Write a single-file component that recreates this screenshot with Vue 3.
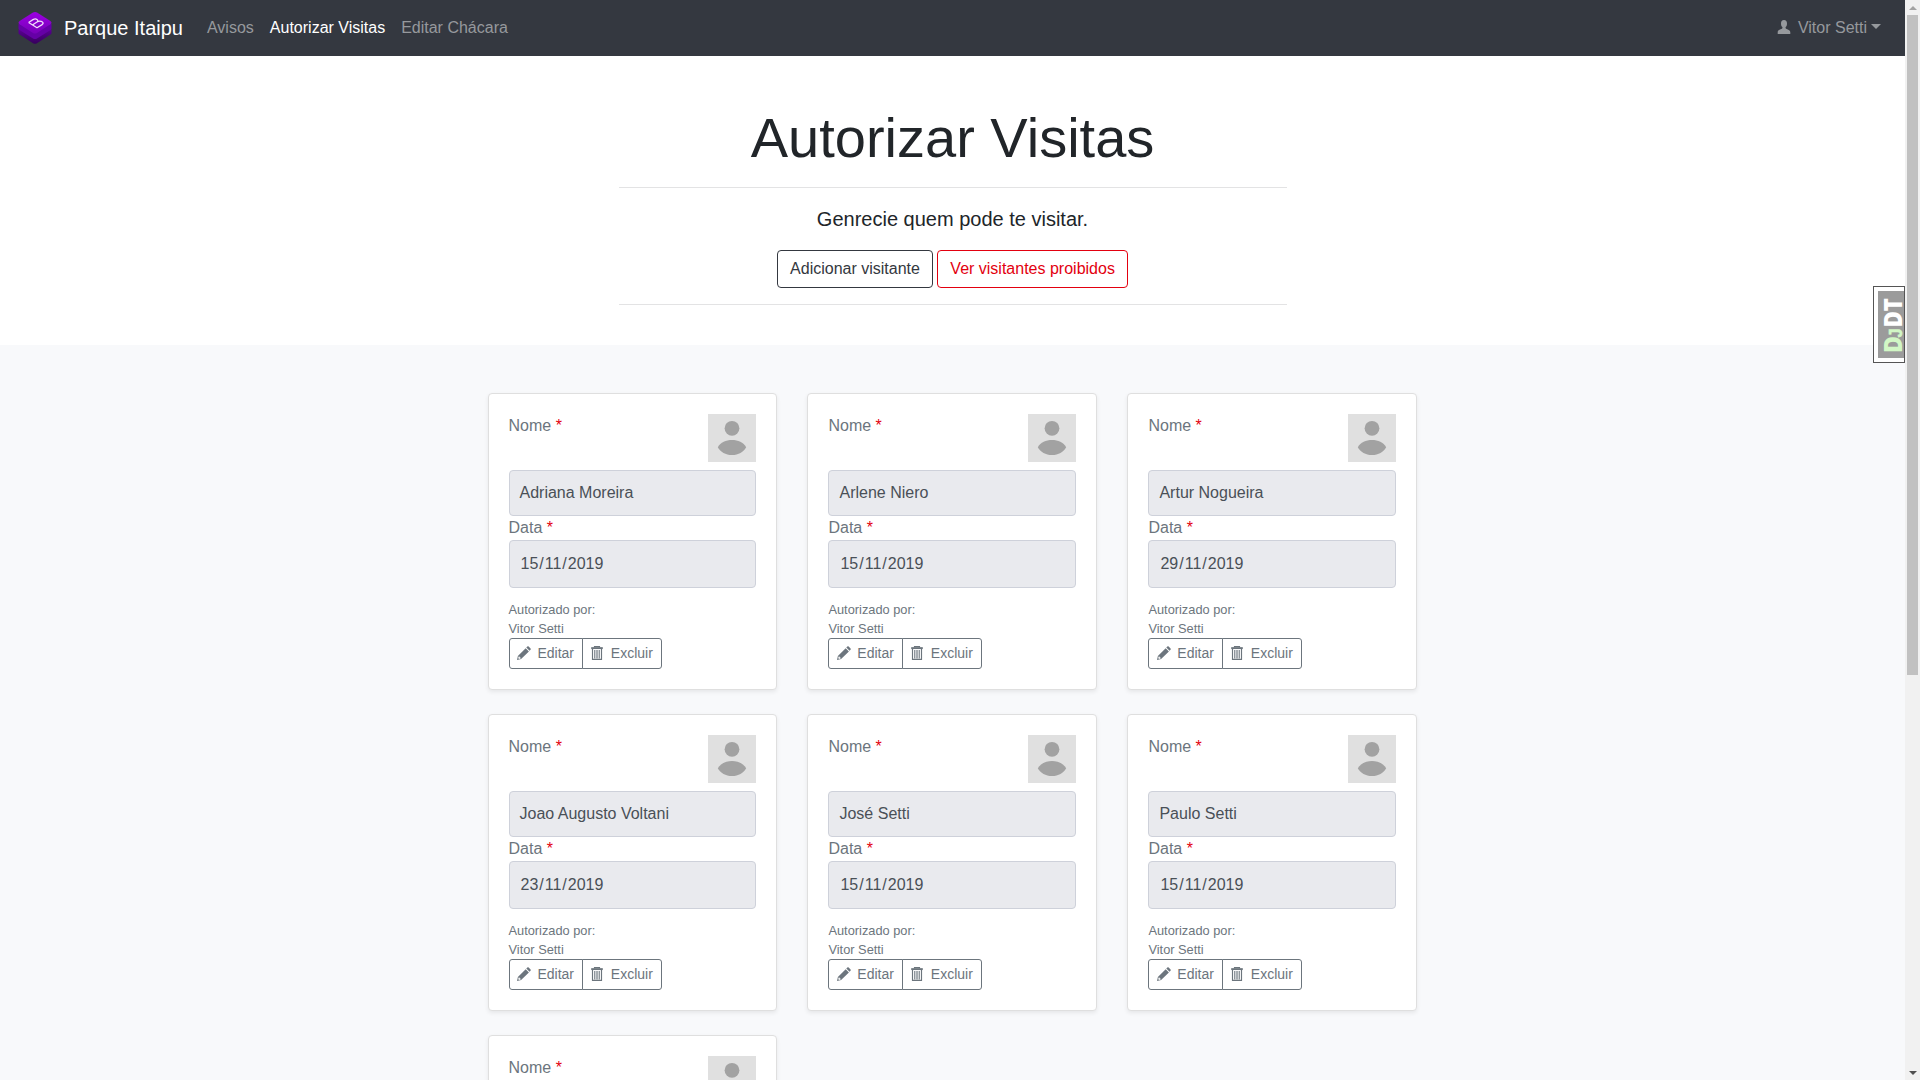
<script setup>
const visitors = [
  { id: 1, name: 'Adriana Moreira', date: ['15', '11', '2019'] },
  { id: 2, name: 'Arlene Niero', date: ['15', '11', '2019'] },
  { id: 3, name: 'Artur Nogueira', date: ['29', '11', '2019'] },
  { id: 4, name: 'Joao Augusto Voltani', date: ['23', '11', '2019'] },
  { id: 5, name: 'José Setti', date: ['15', '11', '2019'] },
  { id: 6, name: 'Paulo Setti', date: ['15', '11', '2019'] },
  { id: 7 },
]
</script>

<template>
  <div class="window">
    <div class="page">
      <nav class="navbar">
        <svg class="logo" width="34" height="34" viewBox="0 0 34 34">
          <defs>
            <linearGradient id="top" x1="0" y1="0" x2="0" y2="1">
              <stop offset="0" stop-color="#9c00e2" />
              <stop offset="1" stop-color="#7800b8" />
            </linearGradient>
            <linearGradient id="side" x1="0" y1="0" x2="0" y2="1">
              <stop offset="0" stop-color="#6a00ad" />
              <stop offset="1" stop-color="#36005c" />
            </linearGradient>
          </defs>
          <path d="M0.5 19 L17 12 L33.5 19 V22 Q33.5 23 32.5 23.6 L19 32.2 Q17 33.4 15 32.2 L1.5 23.6 Q.5 23 .5 22Z" fill="url(#side)" />
          <path d="M0.5 13 H33.5 V17.5 Q33.5 18.5 32.5 19 L19 27.5 Q17 28.7 15 27.5 L1.5 19 Q.5 18.5 .5 17.5Z" fill="#6500a6" />
          <path d="M15 1.6 Q17 .6 19 1.6 L32.4 10 Q34.6 11.8 32.4 13.3 L19 22 Q17 23.2 15 22 L1.6 13.3 Q-.6 11.8 1.6 10Z" fill="url(#top)" />
          <path d="M10.6 11.5 L19 16.7 L23.7 13.9 Q26.400 12 24 10.700 Q21.600 9.500 19 11 L14.800 13.800 M10.600 11.500 L15 8.600 Q17.400 7.300 19 8.500 Q20.700 9.800 19 11" fill="none" stroke="#f2ddfb" stroke-width="1.3" stroke-linejoin="round" />
        </svg>
        <span class="brand">Parque Itaipu</span>
        <a class="nav-link">Avisos</a>
        <a class="nav-link active">Autorizar Visitas</a>
        <a class="nav-link">Editar Chácara</a>
        <a class="user">
          <svg class="person" width="14" height="14" viewBox="0 0 14 14">
            <path d="M7 0C9.1 0 10 1.4 10 3.4C10 5 9.5 6.3 8.7 7.1C8.4 7.8 8.5 8.4 9.1 8.7C11.6 9.7 13.3 10.2 13.3 12.3V14H.7V12.3C.7 10.2 2.4 9.7 4.9 8.7C5.5 8.4 5.6 7.8 5.3 7.1C4.5 6.3 4 5 4 3.4C4 1.4 4.9 0 7 0Z" fill="currentColor" />
          </svg>
          <span>Vitor Setti</span>
          <svg class="caret" width="10" height="5" viewBox="0 0 10 5"><path d="M0 0H10L5 5Z" fill="currentColor" /></svg>
        </a>
      </nav>

      <header class="hero">
        <div class="hero-inner">
          <h1>Autorizar Visitas</h1>
          <hr>
          <p>Genrecie quem pode te visitar.</p>
          <div class="actions">
            <button class="btn dark">Adicionar visitante</button>
            <button class="btn danger">Ver visitantes proibidos</button>
          </div>
          <hr>
        </div>
      </header>

      <main class="album">
        <div class="grid">
          <article v-for="v in visitors" :key="v.id" class="card">
            <div class="card-top">
              <label>Nome <b>*</b></label>
              <svg width="48" height="48" viewBox="0 0 48 48">
                <rect width="48" height="48" fill="#e0e0e0" />
                <circle cx="24" cy="14.3" r="7.4" fill="#a2a2a2" />
                <path d="M9.8 33.2C12.5 28.5 18 26 24 26S35.5 28.5 38.2 33.2C35.5 38 30.5 41 24 41S12.5 38 9.8 33.2Z" fill="#a2a2a2" />
              </svg>
            </div>
            <template v-if="v.name">
              <div class="field">{{ v.name }}</div>
              <label class="date-label">Data <b>*</b></label>
              <div class="field date">
                <span>{{ v.date[0] }}<i>/</i>{{ v.date[1] }}<i>/</i>{{ v.date[2] }}</span>
              </div>
              <div class="small">Autorizado por:<br>Vitor Setti</div>
              <div class="group">
                <button>
                  <svg width="14" height="14" viewBox="0 0 14 14" fill="currentColor">
                    <path d="M10.3 .6Q11-.1 11.7 .6L13.5 2.4Q14.2 3.1 13.5 3.8L12.5 4.8L9.3 1.6Z" />
                    <path fill-rule="evenodd" d="M8.7 2.2L11.9 5.4L4.1 13.1L0 14L.9 9.9ZM1.7 10.5L1.2 12.1L2 12.9L3.6 12.4L3.5 11.4L2.6 11.3L2.5 10.4Z" />
                  </svg>
                  <span>Editar</span>
                </button>
                <button>
                  <svg width="14" height="14" viewBox="0 0 14 14" fill="none" stroke="currentColor">
                    <path d="M4.5 1.5V.6H9.5V1.5M2.5 3V13.4H11.5V3" stroke-width="1.15" />
                    <path d="M1.2 2.1H12.8" stroke-width="1.9" />
                    <path d="M4.6 4V12.5M6.2 4V12.5M7.800 4V12.500M9.400 4V12.500" stroke-width=".85" />
                  </svg>
                  <span>Excluir</span>
                </button>
              </div>
            </template>
          </article>
        </div>
      </main>
    </div>

    <aside class="scrollbar">
      <i class="arrow up"></i>
      <div class="thumb"></div>
      <i class="arrow down"></i>
    </aside>

    <div class="toolbar-handle">
      <svg width="26" height="67" viewBox="0 0 26 67">
        <rect width="26" height="67" fill="#9b9b9b" />
        <g transform="translate(24 61) rotate(-90)" font-family="'Open Sans', 'Noto Sans', sans-serif" font-weight="800">
          <text x="-1" y="0" font-size="25" fill="#d2f7c5" textLength="17" lengthAdjust="spacingAndGlyphs">D</text>
          <text x="14.500" y="0" font-family="'Liberation Sans', sans-serif" font-size="18.500" fill="#d2f7c5" stroke="#d2f7c5" stroke-width=".6" textLength="9" lengthAdjust="spacingAndGlyphs">J</text>
          <text x="24.500" y="0" font-size="25" fill="#fff" textLength="29.500" lengthAdjust="spacingAndGlyphs">DT</text>
        </g>
      </svg>
    </div>
  </div>
</template>

<style>
body { margin: 0; overflow: hidden; }
</style>

<style scoped>
* { box-sizing: border-box; }
.window {
  position: relative;
  display: flex;
  width: 1920px;
  height: 1080px;
  overflow: hidden;
  font-family: "Liberation Sans", Arial, sans-serif;
  font-size: 16px;
  line-height: 24px;
  color: #212529;
}
.page { width: 1905px; height: 1080px; overflow: hidden; background: #f8f9fb; }
.navbar {
  display: flex;
  align-items: center;
  height: 56px;
  padding: 0 24px 0 18px;
  background: #343840;
  color: #96999d;
}
.logo { margin-right: 12px; }
.brand { margin-right: 16px; font-size: 20px; line-height: 30px; color: #fff; }
.nav-link { padding: 0 8px; }
.active { color: #fff; }
.user { display: flex; align-items: center; margin-left: auto; }
.person { margin: 0 7px 2px 0; }
.caret { margin: -3px 0 0 4px; }
.hero { height: 289.2px; padding-top: 48px; background: #fff; text-align: center; }
.hero-inner { width: 668px; margin: 0 auto; }
h1 { margin: 0 0 8px; font-size: 56px; font-weight: 300; line-height: 67.2px; }
hr { height: 1px; margin: 16px 0; border: 0; background: #e3e3e4; }
p { margin: 0 0 16px; font-size: 20px; line-height: 30px; }
.actions { display: flex; justify-content: center; gap: 4.4px; }
button { font-family: inherit; background: #fff; }
.btn {
  height: 38px;
  padding: 0 12px;
  border: 1px solid;
  border-radius: 4px;
  font-size: 16px;
  line-height: 24px;
}
.dark { color: #343840; }
.danger { color: #e3000f; }
.album { padding: 48px 0 0 487.5px; }
.grid {
  display: grid;
  grid-template-columns: repeat(3, 289.97px);
  gap: 24px 30px;
}
.card {
  height: 297px;
  padding: 20px;
  border: 1px solid #dfdfdf;
  border-radius: 4px;
  background: #fff;
  box-shadow: 0 2px 4px rgba(0, 0, 0, .075);
  color: #6c757d;
}
.card-top { display: flex; justify-content: space-between; height: 56px; }
.card b { font-weight: 400; color: #e3000f; }
.date-label { display: block; }
.field {
  display: flex;
  align-items: center;
  height: 46px;
  padding: 0 11px 0 10px;
  border: 1px solid #ced1da;
  border-radius: 4px;
  background: #e9eaee;
  color: #495057;
}
.date { height: 48px; padding: 0 11px; }
.date i { margin: 0 1px; font-style: normal; }
.small { margin-top: 11.6px; font-size: 12.8px; line-height: 19.2px; }
.group { display: flex; }
.group button {
  display: flex;
  align-items: center;
  height: 31px;
  padding: 0 8px 0 7.4px;
  border: 1px solid #6c757d;
  border-radius: 3px 0 0 3px;
  font-size: 14px;
  line-height: 21px;
  color: #6c757d;
}
.group button + button { margin-left: -1px; border-radius: 0 3px 3px 0; }
.group svg { margin: 0 6.5px 2px 0; }
.scrollbar {
  display: flex;
  flex-direction: column;
  align-items: center;
  width: 15px;
  height: 1080px;
  padding: 6px 0 5px;
  background: #f1f1f1;
}
.arrow { border: 4px solid transparent; }
.up { border-top: 0; border-bottom-color: #a3a3a3; }
.down { margin-top: auto; border-bottom: 0; border-top-color: #505050; }
.thumb { width: 11px; height: 660px; margin-top: 5px; background: #c1c1c1; }
.toolbar-handle {
  position: absolute;
  top: 286px;
  left: 1873px;
  display: flex;
  width: 32px;
  height: 77px;
  padding: 4px 0 4px 4px;
  border: 1px solid #555;
  background: #fff;
}
</style>
